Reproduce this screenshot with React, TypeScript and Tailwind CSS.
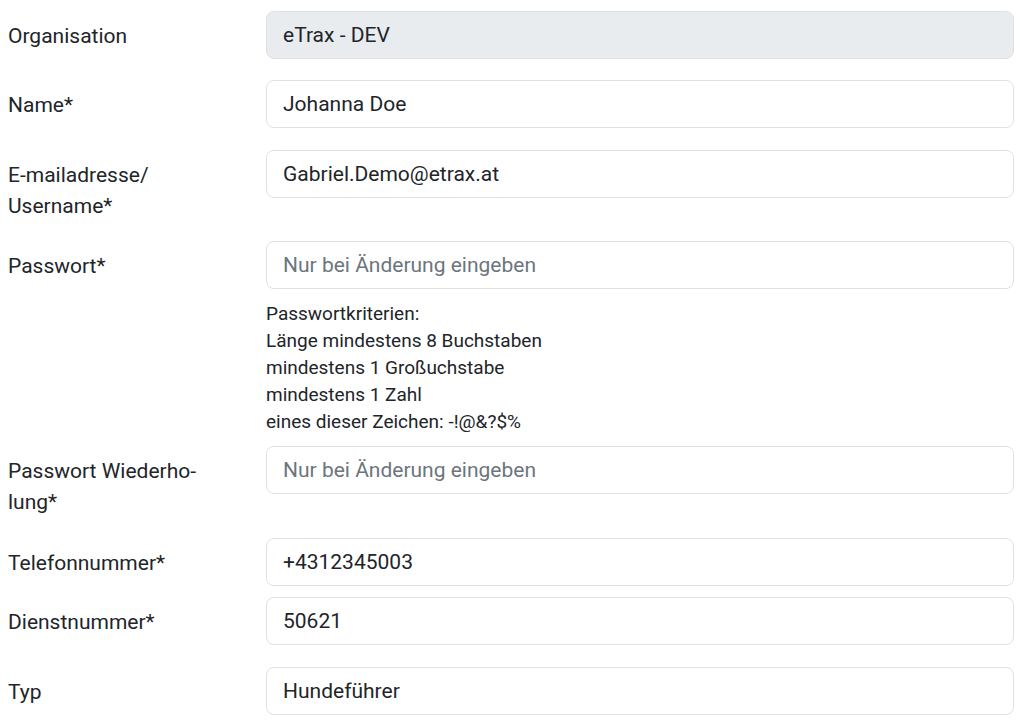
import React from "react";

function Field({ label, value, placeholder, disabled, className = "" }: { label: React.ReactNode; value?: string; placeholder?: string; disabled?: boolean; className?: string }) {
  return (
    <div className={`flex items-start ${className}`}>
      <label className="w-[258px] shrink-0 pt-[10px] text-[21px] leading-[31px] text-[#212529]">{label}</label>
      <input
        readOnly
        disabled={disabled}
        defaultValue={value}
        placeholder={placeholder}
        className={`flex-1 h-12 rounded-lg border border-[#dee2e6] px-4 text-[21px] text-[#212529] placeholder:text-[#6c757d] outline-none ${disabled ? "bg-[#e9ecef]" : "bg-white"}`}
      />
    </div>
  );
}

export default function App() {
  return (
    <div className="min-h-[722px] bg-white pt-[11px] pl-2 pr-[10px] font-['Roboto',sans-serif]">
      <Field label="Organisation" value="eTrax - DEV" disabled className="mb-[21px]" />
      <Field label="Name*" value="Johanna Doe" className="mb-[22px]" />
      <Field label={<>E-mailadresse/<br />Username*</>} value="Gabriel.Demo@etrax.at" className="mb-[19px]" />
      <div className="mb-[11px]">
        <Field label="Passwort*" placeholder="Nur bei Änderung eingeben" />
        <div className="ml-[258px] mt-[11px] text-[19px] leading-[27px] text-[#212529]">
          <div>Passwortkriterien:</div>
          <div>Länge mindestens 8 Buchstaben</div>
          <div>mindestens 1 Großuchstabe</div>
          <div>mindestens 1 Zahl</div>
          <div>eines dieser Zeichen: -!@&amp;?$%</div>
        </div>
      </div>
      <Field label={<>Passwort Wiederho-<br />lung*</>} placeholder="Nur bei Änderung eingeben" className="mb-[20px]" />
      <Field label="Telefonnummer*" value="+4312345003" className="mb-[11px]" />
      <Field label="Dienstnummer*" value="50621" className="mb-[22px]" />
      <Field label="Typ" value="Hundeführer" />
    </div>
  );
}
